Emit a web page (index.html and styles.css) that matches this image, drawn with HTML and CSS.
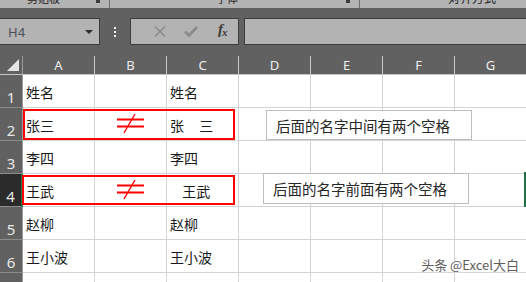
FILE: index.html
```html
<!DOCTYPE html>
<html lang="zh-CN">
<head>
    <meta charset="UTF-8">
    <meta name="viewport" content="width=device-width, initial-scale=1.0">
    <title>Excel 空格对比</title>
    <link rel="stylesheet" href="styles.css">
</head>
<body>

    <!-- 功能区底部 -->
    <div class="ribbon-edge">
        <div class="group group-clip"><span class="group-label">剪贴板</span><span class="launcher"></span></div>
        <div class="group group-font"><span class="group-label">字体</span><span class="launcher"></span></div>
        <div class="group group-align"><span class="group-label">对齐方式</span></div>
    </div>

    <!-- 编辑栏 -->
    <div class="formula-row">
        <div class="name-box">
            <span>H4</span>
            <span class="caret"></span>
        </div>
        <div class="dots"><i></i><i></i><i></i></div>
        <div class="fx-buttons">
            <span class="fx-btn"><svg width="12" height="11" viewBox="0 0 12 11"><path d="M1 0.5L11 10.5M11 0.5L1 10.5" stroke="#8a8a8a" stroke-width="1.5"/></svg></span>
            <span class="fx-btn"><svg width="14" height="11" viewBox="0 0 14 11"><path d="M1 5.5L5 9.5L13 1" fill="none" stroke="#8a8a8a" stroke-width="2.6"/></svg></span>
            <span class="fx-btn fx"><i>f</i><i>x</i></span>
        </div>
        <div class="formula-input"></div>
    </div>

    <!-- 工作表 -->
    <div class="sheet">
        <div class="grid">
            <div class="corner"><span class="corner-tri"></span></div>
            <div class="col-head">A</div>
            <div class="col-head">B</div>
            <div class="col-head">C</div>
            <div class="col-head">D</div>
            <div class="col-head">E</div>
            <div class="col-head">F</div>
            <div class="col-head">G</div>

            <div class="row-head">1</div>
            <div class="cell">姓名</div><div class="cell"></div><div class="cell">姓名</div>
            <div class="cell"></div><div class="cell"></div><div class="cell"></div><div class="cell"></div>

            <div class="row-head">2</div>
            <div class="cell">张三</div>
            <div class="cell center"><svg class="neq" width="28" height="22" viewBox="0 0 28 22"><path d="M0 6.5H27M0 13.5H27" stroke="#ff0000" stroke-width="2"/><path d="M18 1L7 20" stroke="#ff0000" stroke-width="1.4"/></svg></div>
            <div class="cell spaced">张  三</div>
            <div class="cell"></div><div class="cell"></div><div class="cell"></div><div class="cell"></div>

            <div class="row-head">3</div>
            <div class="cell">李四</div><div class="cell"></div><div class="cell">李四</div>
            <div class="cell"></div><div class="cell"></div><div class="cell"></div><div class="cell"></div>

            <div class="row-head active">4</div>
            <div class="cell">王武</div>
            <div class="cell center"><svg class="neq" width="28" height="22" viewBox="0 0 28 22"><path d="M0 6.5H27M0 13.5H27" stroke="#ff0000" stroke-width="2"/><path d="M18 1L7 20" stroke="#ff0000" stroke-width="1.4"/></svg></div>
            <div class="cell lead">  王武</div>
            <div class="cell"></div><div class="cell"></div><div class="cell"></div><div class="cell"></div>

            <div class="row-head">5</div>
            <div class="cell">赵柳</div><div class="cell"></div><div class="cell">赵柳</div>
            <div class="cell"></div><div class="cell"></div><div class="cell"></div><div class="cell"></div>

            <div class="row-head">6</div>
            <div class="cell">王小波</div><div class="cell"></div><div class="cell">王小波</div>
            <div class="cell"></div><div class="cell"></div><div class="cell"></div><div class="cell"></div>

            <div class="row-head">7</div>
            <div class="cell"></div><div class="cell"></div><div class="cell"></div>
            <div class="cell"></div><div class="cell"></div><div class="cell"></div><div class="cell"></div>
        </div>

        <!-- 图形：红框和文本框 -->
        <div class="mark mark-row2"></div>
        <div class="mark mark-row4"></div>
        <div class="note note-row2">后面的名字中间有两个空格</div>
        <div class="note note-row4">后面的名字前面有两个空格</div>
        <div class="selection"></div>
        <div class="watermark">头条 @Excel大白</div>
    </div>

</body>
</html>
```

FILE: styles.css
```css
/* Загальні стилі */
body {
    margin: 0;
    width: 526px;
    height: 282px;
    overflow: hidden;
    background-color: #616161;
    font-family: "Noto Sans CJK SC", "Noto Sans", sans-serif;
}

/* 功能区底部 */
.ribbon-edge {
    display: flex;
    height: 8px;
    background-color: #b3b3b3;
    overflow: hidden;
}

.group {
    display: flex;
    align-items: flex-start;
    height: 8px;
    border-right: 1px solid #6d6d6d;
    font-size: 11px;
    color: #262626;
}

.group-label {
    line-height: 12px;
    margin-top: -8px;
}

.launcher {
    width: 4px;
    height: 3px;
    background-color: #3a3a3a;
    margin-left: auto;
    margin-right: 9px;
}

.group-clip {
    width: 110px;
    padding-left: 27px;
    box-sizing: border-box;
}

.group-font {
    width: 250px;
    padding-left: 106px;
    box-sizing: border-box;
}

.group-align {
    border-right: none;
    padding-left: 88px;
    font-size: 12px;
}

/* 编辑栏 */
.formula-row {
    display: flex;
    height: 27px;
    padding: 10px 0 11px;
    background-color: #616161;
}

.name-box {
    display: flex;
    align-items: center;
    justify-content: space-between;
    width: 101px;
    margin-left: -1px;
    padding: 0 6px 0 8px;
    box-sizing: border-box;
    background-color: #b3b3b3;
    border: 1px solid #3d3d3d;
    font-family: "Noto Sans", sans-serif;
    font-size: 13px;
    color: #4a4f5a;
}

.caret {
    width: 0;
    height: 0;
    border-left: 4px solid transparent;
    border-right: 4px solid transparent;
    border-top: 4px solid #2e2e2e;
}

.dots {
    display: flex;
    flex-direction: column;
    align-items: center;
    justify-content: center;
    gap: 2px;
    width: 30px;
}

.dots i {
    width: 2px;
    height: 2px;
    background-color: #f0f0f0;
}

.fx-buttons {
    display: flex;
    align-items: center;
    width: 109px;
    box-sizing: border-box;
    background-color: #b3b3b3;
    border: 1px solid #3d3d3d;
    padding-left: 13px;
}

.fx-btn {
    display: flex;
    justify-content: center;
    width: 36px;
}

.fx-btn svg {
    display: block;
}

.fx {
    font-family: "Liberation Serif", serif;
    font-weight: bold;
    color: #3a3a3a;
    font-size: 15px;
    letter-spacing: -1px;
}

.fx i:last-child {
    font-size: 11px;
    line-height: 22px;
}

.formula-input {
    flex: 1;
    margin-left: 5px;
    background-color: #b3b3b3;
    border: 1px solid #3d3d3d;
    border-right: none;
}

/* 工作表 */
.sheet {
    position: relative;
    height: 226px;
    overflow: hidden;
    background-color: #ffffff;
}

.grid {
    display: grid;
    grid-template-columns: 23px repeat(7, 72px);
    grid-template-rows: 19px repeat(7, 33px);
}

.corner {
    position: relative;
    background-color: #616161;
    border-right: 1px solid #9a9a9a;
    border-bottom: 1px solid #c6c6c6;
}

.corner-tri {
    position: absolute;
    right: 3px;
    bottom: 3px;
    width: 0;
    height: 0;
    border-left: 12px solid transparent;
    border-bottom: 12px solid #e6e6e6;
}

.col-head {
    display: flex;
    align-items: flex-end;
    justify-content: center;
    padding-bottom: 1px;
    background-color: #616161;
    border-right: 1px solid #c6c6c6;
    border-bottom: 1px solid #c6c6c6;
    font-family: "Noto Sans", sans-serif;
    font-size: 13px;
    line-height: 16px;
    color: #eeeeee;
}

.row-head {
    display: flex;
    align-items: flex-end;
    justify-content: center;
    background-color: #616161;
    border-right: 1px solid #9a9a9a;
    border-bottom: 1px solid #8c8c8c;
    font-family: "Noto Sans", sans-serif;
    font-size: 15px;
    line-height: 17px;
    padding-bottom: 1px;
    color: #e8e8e8;
}

.row-head.active {
    background-color: #2b2b2b;
    border-right: 2px solid #217346;
}

.cell {
    display: flex;
    align-items: flex-end;
    padding: 0 0 6px 3px;
    border-right: 1px solid #d4d4d4;
    border-bottom: 1px solid #d4d4d4;
    font-size: 14px;
    line-height: 18px;
    color: #1a1a1a;
    white-space: pre;
}

.cell.center {
    align-items: center;
    justify-content: center;
    padding: 0;
}

.spaced {
    word-spacing: 4.5px;
}

.lead {
    word-spacing: 3px;
}

.neq {
    display: block;
}

/* 图形 */
.mark {
    position: absolute;
    border: 2px solid #ff0000;
    box-sizing: border-box;
}

.mark-row2 {
    left: 23px;
    top: 53px;
    width: 212px;
    height: 31px;
}

.mark-row4 {
    left: 22px;
    top: 119px;
    width: 213px;
    height: 30px;
}

.note {
    position: absolute;
    display: flex;
    align-items: center;
    box-sizing: border-box;
    background-color: #ffffff;
    border: 1px solid #bdbdbd;
    font-size: 14.5px;
    color: #262626;
}

.note-row2 {
    left: 266px;
    top: 54px;
    width: 206px;
    height: 30px;
    padding-left: 9px;
}

.note-row4 {
    left: 263px;
    top: 117px;
    width: 206px;
    height: 31px;
    padding-left: 9px;
}

.selection {
    position: absolute;
    left: 524px;
    top: 116px;
    width: 3px;
    height: 35px;
    background-color: #217346;
}

.watermark {
    position: absolute;
    right: 7px;
    bottom: 8px;
    font-size: 13px;
    color: #5e5e5e;
    text-shadow: 0 0 2px #ffffff;
}
```
